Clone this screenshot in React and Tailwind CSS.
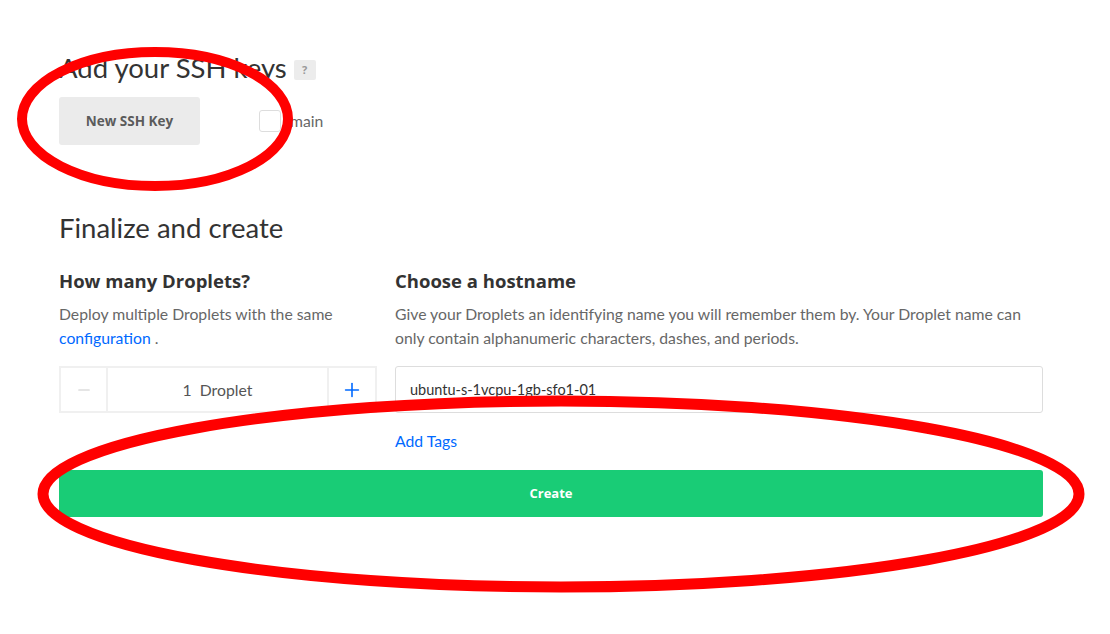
import { Minus, Plus } from 'lucide-react';

export default function App() {
  return (
    <div className="relative w-[1110px] h-[634px] bg-white overflow-hidden font-['Lato','Open_Sans',sans-serif] text-[#333]">
      <div className="pl-[59px] pt-[52px] w-[1043px]">
        {/* ssh keys */}
        <div className="flex items-center">
          <h2 className="text-[27.5px] leading-[32px] font-normal text-[#333]">Add your SSH keys</h2>
          <span className="ml-[7px] mt-[4px] w-[22px] h-[20px] rounded-[2px] bg-[#ececec] text-[#999] text-[11px] font-bold font-['Open_Sans',sans-serif] flex items-center justify-center">?</span>
        </div>
        <div className="mt-[13px] flex items-center">
          <button className="w-[141px] h-[48px] rounded-[3px] bg-[#ebebeb] text-[#5b5b5b] text-[13.5px] font-bold font-['Open_Sans',sans-serif]">New SSH Key</button>
          <label className="ml-[59px] flex items-center">
            <span className="w-[22px] h-[22px] rounded-[3px] border border-[#ddd] bg-white" />
            <span className="ml-[9px] text-[15.75px] text-[#676767]">main</span>
          </label>
        </div>

        {/* finalize */}
        <h2 className="mt-[67px] text-[27.5px] leading-[32px] font-normal text-[#333]">Finalize and create</h2>

        <div className="mt-[25px] grid grid-cols-[318px_648px] gap-x-[18px]">
          <div className="flex flex-col">
            <h3 className="text-[18.5px] leading-[24px] font-bold font-['Open_Sans',sans-serif] text-[#333]">How many Droplets?</h3>
            <p className="mt-[9px] text-[15.75px] leading-[24px] text-[#676767]">
              Deploy multiple Droplets with the same <span className="text-[#0069ff]">configuration</span> .
            </p>
            <div className="mt-[16px] h-[47px] flex border-2 border-[#f0f0f0]">
              <div className="w-[47px] flex items-center justify-center border-r-2 border-[#f0f0f0] text-[#ccc]">
                <Minus size={18} strokeWidth={1.5} />
              </div>
              <div className="flex-1 flex items-center justify-center text-[15.75px] text-[#555]">
                1&nbsp; Droplet
              </div>
              <div className="w-[48px] flex items-center justify-center border-l-2 border-[#f0f0f0] text-[#0069ff]">
                <Plus size={22} strokeWidth={1.75} />
              </div>
            </div>
          </div>

          <div className="flex flex-col">
            <h3 className="text-[18.5px] leading-[24px] font-bold font-['Open_Sans',sans-serif] text-[#333]">Choose a hostname</h3>
            <p className="mt-[9px] text-[15.75px] leading-[24px] text-[#676767]">
              Give your Droplets an identifying name you will remember them by. Your Droplet name can only contain alphanumeric characters, dashes, and periods.
            </p>
            <div className="mt-[16px] h-[47px] border border-[#ddd] rounded-[3px] flex items-center px-[14px] text-[14.5px] text-[#333]">
              ubuntu-s-1vcpu-1gb-sfo1-01
            </div>
            <a className="mt-[16px] text-[15.75px] leading-[24px] text-[#0069ff]">Add Tags</a>
          </div>
        </div>

        <button className="mt-[17px] w-[984px] h-[47px] rounded-[3px] bg-[#19cc76] text-white text-[13px] font-bold font-['Open_Sans',sans-serif]">Create</button>
      </div>

      {/* annotation marks */}
      <svg className="absolute inset-0 pointer-events-none" width="1110" height="634">
        <ellipse cx="155" cy="119" rx="133" ry="67" fill="none" stroke="#ff0000" strokeWidth="10" />
        <ellipse cx="561" cy="494" rx="518" ry="93" fill="none" stroke="#ff0000" strokeWidth="11" />
      </svg>
    </div>
  );
}
